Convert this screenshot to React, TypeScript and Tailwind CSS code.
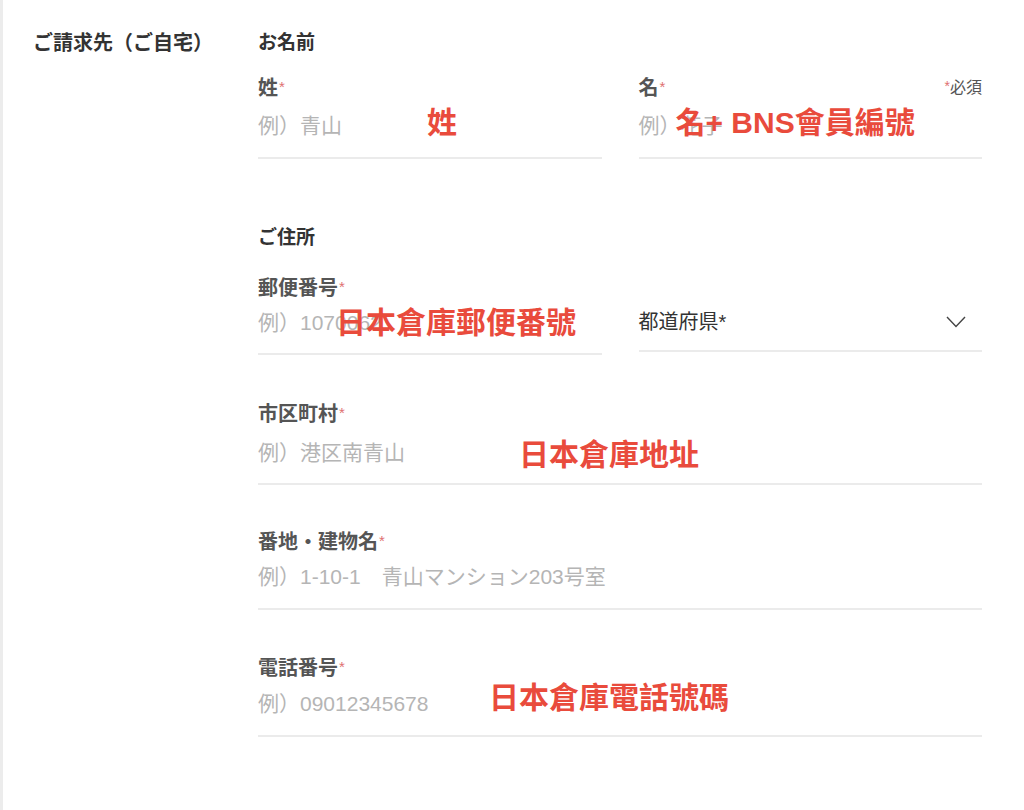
import type { ReactNode } from 'react';

const jp = "font-['Liberation_Sans','Noto_Sans_CJK_JP',sans-serif]";
const tc = "font-['Liberation_Sans','Noto_Sans_CJK_TC',sans-serif]";

function Req() {
  return <span className="relative top-[-3px] ml-[1px] text-[15px] font-normal text-[#e07070]">*</span>;
}

// red handwritten-style annotation laid over the input
function Note({ text, pos }: { text: string; pos: string }) {
  return (
    <span
      className={`absolute whitespace-nowrap text-[30px] font-bold leading-[30px] text-[#e94b3c] ${tc} ${pos}`}
    >
      {text}
    </span>
  );
}

interface FieldProps {
  label: string;
  placeholder: string;
  extra?: ReactNode;
  note?: ReactNode;
  className?: string;
  inputPad?: string;
}

function Field({ label, placeholder, extra, note, className = '', inputPad = 'pt-[8px] pb-[16px]' }: FieldProps) {
  return (
    <div className={className}>
      <div className="flex items-start justify-between">
        <label className="text-[20px] font-bold leading-[26px] text-[#555]">
          {label}
          <Req />
        </label>
        {extra}
      </div>
      <div className={`relative border-b-2 border-[#ebebeb] ${inputPad}`}>
        <div className="text-[21px] leading-[30px] text-[#b5b5b5]">{placeholder}</div>
        {note}
      </div>
    </div>
  );
}

export default function App() {
  return (
    <div className={`flex min-h-screen border-l-[3px] border-[#ececec] bg-white pt-[29px] ${jp}`}>
      <div className="w-[255px] shrink-0 pl-[30px]">
        <h2 className="text-[20px] font-bold leading-[28px] text-[#333]">ご請求先（ご自宅）</h2>
      </div>

      <div className="w-[724px] shrink-0">
        <h3 className="text-[19px] font-bold leading-[28px] text-[#333]">お名前</h3>
        <div className="mt-[18px] grid grid-cols-2 gap-x-[37px]">
          <Field
            label="姓"
            placeholder="例）青山"
            note={<Note text="姓" pos="left-[169px] top-[5px]" />}
          />
          <Field
            label="名"
            placeholder="例）花子"
            extra={
              <span className="text-[16px] leading-[26px] text-[#555]">
                <span className="relative top-[-2px] text-[14px] text-[#e07070]">*</span>必須
              </span>
            }
            note={<Note text="名+ BNS會員編號" pos="left-[37px] top-[5px]" />}
          />
        </div>

        <h3 className="mt-[65px] text-[19px] font-bold leading-[28px] text-[#333]">ご住所</h3>
        <div className="mt-[23px] grid grid-cols-2 gap-x-[37px]">
          <Field
            label="郵便番号"
            placeholder="例）1070062"
            inputPad="pt-[5px] pb-[15px]"
            note={<Note text="日本倉庫郵便番號" pos="left-[78px] top-[5px]" />}
          />
          <div className="mt-[32px] flex self-start items-center justify-between border-b-2 border-[#ebebeb] pb-[13px]">
            <span className="text-[20px] leading-[30px] text-[#333]">都道府県*</span>
            <svg width="20" height="12" viewBox="0 0 20 12" className="mr-[16px]" fill="none">
              <path d="M1 1l9 9.5L19 1" stroke="#444" strokeWidth="1.4" />
            </svg>
          </div>
        </div>

        <Field
          className="mt-[46px]"
          inputPad="pt-[9px] pb-[15px]"
          label="市区町村"
          placeholder="例）港区南青山"
          note={<Note text="日本倉庫地址" pos="left-[261px] top-[11px]" />}
        />
        <Field
          className="mt-[44px]"
          inputPad="pt-[5px] pb-[16px]"
          label="番地・建物名"
          placeholder="例）1-10-1　青山マンション203号室"
        />
        <Field
          className="mt-[45px]"
          inputPad="pt-[6px] pb-[16px]"
          label="電話番号"
          placeholder="例）09012345678"
          note={<Note text="日本倉庫電話號碼" pos="left-[231px] top-[0px]" />}
        />
      </div>
    </div>
  );
}
